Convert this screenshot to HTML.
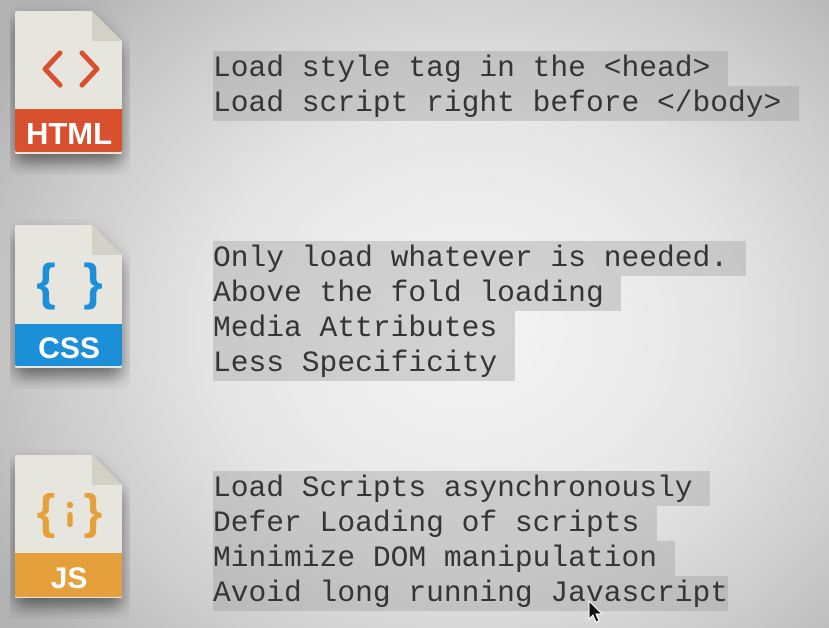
<!DOCTYPE html>
<html><head><style>
html,body{margin:0;padding:0}
body{width:829px;height:628px;overflow:hidden;position:relative;
background:radial-gradient(ellipse 560px 480px at 470px 330px,#f5f5f5 0%,#e6e6e6 45%,#c8c8c8 80%,#b2b2b2 100%);}
.icon{position:absolute;left:10px;width:120px;height:170px}
.blk{position:absolute;left:213px;font-family:"Liberation Mono","Courier New",monospace;font-size:29.6px;color:#353535;line-height:35px}
.blk span{display:inline-block;background:rgba(150,150,150,0.35);white-space:pre;height:35px}
</style></head><body>
<svg class="icon" style="top:5px" viewBox="0 0 120 170">
<defs><filter id="sh" x="-40%" y="-30%" width="180%" height="170%"><feDropShadow dx="0" dy="9" stdDeviation="8" flood-color="#000" flood-opacity="0.5"/></filter></defs>
<g filter="url(#sh)"><path d="M5 8a2 2 0 0 1 2-2h75l30 30v111a2 2 0 0 1-2 2H7a2 2 0 0 1-2-2z" fill="#e6e6de"/></g>
<path d="M82 6v30h30z" fill="#d3d0c6"/>
<path d="M5 104h107v41a2 2 0 0 1-2 2H7a2 2 0 0 1-2-2z" fill="#d9502f"/>
<path d="M50 48l-15 16 15 16M72 48l15 16-15 16" stroke="#d9502f" stroke-width="5" fill="none" stroke-linecap="round" stroke-linejoin="round"/>
<text x="59" y="139" text-anchor="middle" font-family="Liberation Sans,sans-serif" font-weight="bold" font-size="31" fill="#fff">HTML</text>
</svg>
<svg class="icon" style="top:219px" viewBox="0 0 120 170">
<g filter="url(#sh)"><path d="M5 8a2 2 0 0 1 2-2h75l30 30v111a2 2 0 0 1-2 2H7a2 2 0 0 1-2-2z" fill="#e6e6de"/></g>
<path d="M82 6v30h30z" fill="#d3d0c6"/>
<path d="M5 105h107v40a2 2 0 0 1-2 2H7a2 2 0 0 1-2-2z" fill="#1b8fd8"/>
<text x="59" y="139" text-anchor="middle" font-family="Liberation Sans,sans-serif" font-weight="bold" font-size="30" fill="#fff">CSS</text>
<text x="36" y="80" text-anchor="middle" font-family="Liberation Sans,sans-serif" font-weight="bold" font-size="50" fill="#1b8fd8">{</text>
<text x="83" y="80" text-anchor="middle" font-family="Liberation Sans,sans-serif" font-weight="bold" font-size="50" fill="#1b8fd8">}</text>
</svg>
<svg class="icon" style="top:449px" viewBox="0 0 120 170">
<g filter="url(#sh)"><path d="M5 8a2 2 0 0 1 2-2h75l30 30v111a2 2 0 0 1-2 2H7a2 2 0 0 1-2-2z" fill="#e6e6de"/></g>
<path d="M82 6v30h30z" fill="#d3d0c6"/>
<path d="M5 104h107v42a2 2 0 0 1-2 2H7a2 2 0 0 1-2-2z" fill="#e5a03c"/>
<text x="59" y="139" text-anchor="middle" font-family="Liberation Sans,sans-serif" font-weight="bold" font-size="30" fill="#fff">JS</text>
<text x="36" y="79" text-anchor="middle" font-family="Liberation Sans,sans-serif" font-weight="bold" font-size="48" fill="#e5a03c">{</text>
<text x="83" y="79" text-anchor="middle" font-family="Liberation Sans,sans-serif" font-weight="bold" font-size="48" fill="#e5a03c">}</text>
<circle cx="60" cy="56" r="3.2" fill="#e5a03c"/><rect x="57.3" y="63" width="5.4" height="15" rx="2.7" fill="#e5a03c"/>
</svg>

<div class="blk" style="top:51px">
<span>Load style tag in the &lt;head&gt; </span><br>
<span>Load script right before &lt;/body&gt; </span>
</div>
<div class="blk" style="top:241px">
<span>Only load whatever is needed. </span><br>
<span>Above the fold loading </span><br>
<span>Media Attributes </span><br>
<span>Less Specificity </span>
</div>
<div class="blk" style="top:471px">
<span>Load Scripts asynchronously </span><br>
<span>Defer Loading of scripts </span><br>
<span>Minimize DOM manipulation </span><br>
<span>Avoid long running Javascript</span>
</div>
<svg style="position:absolute;left:588px;top:600px" width="16" height="24" viewBox="0 0 16 24"><path d="M1 1v18l4-4 3 7 3-1-3-7h6z" fill="#111" stroke="#fff" stroke-width="1"/></svg>
</body></html>
